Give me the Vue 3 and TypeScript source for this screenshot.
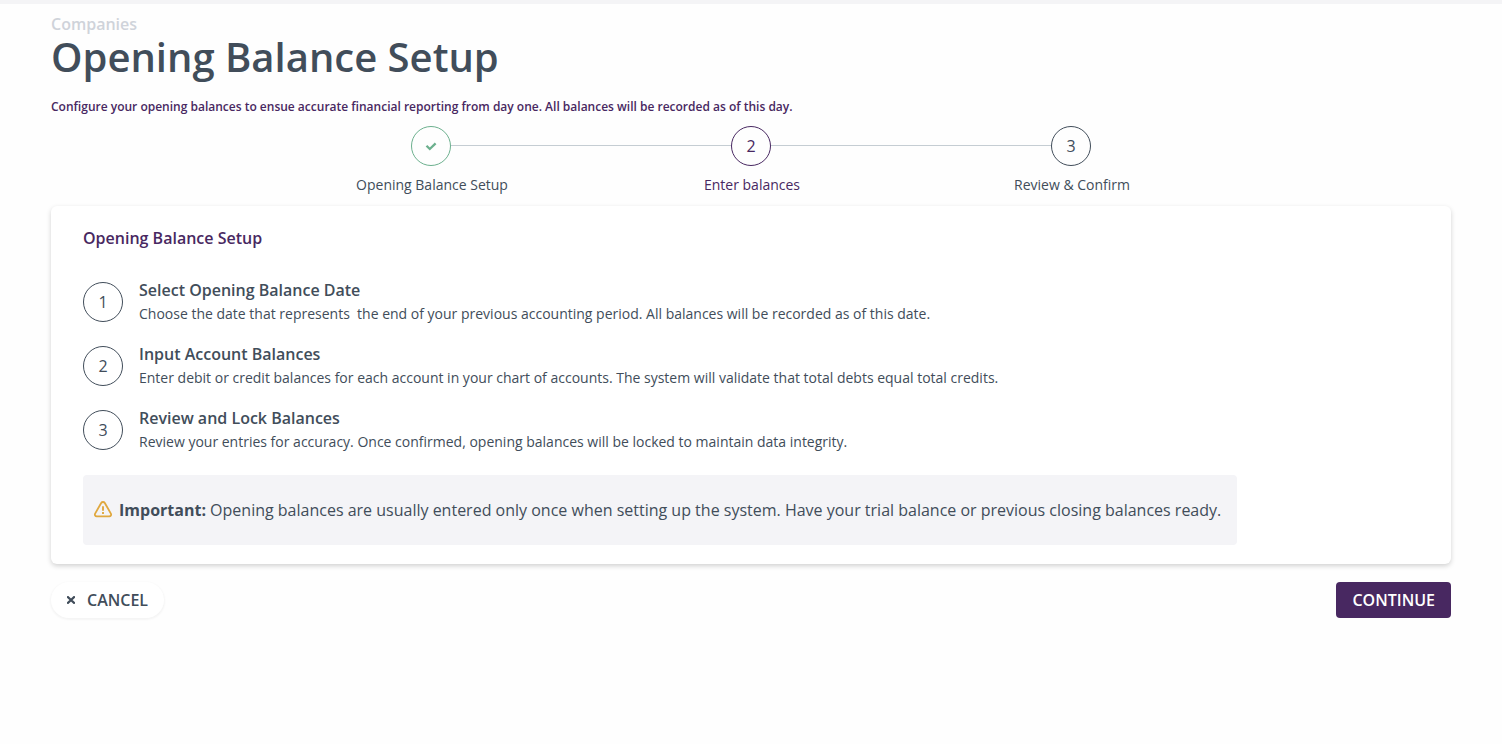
<script setup lang="ts">
interface Step {
  label: string
  state: 'done' | 'active' | 'todo'
}

interface Instruction {
  title: string
  text: string
}

const steps: Step[] = [
  { label: 'Opening Balance Setup', state: 'done' },
  { label: 'Enter balances', state: 'active' },
  { label: 'Review & Confirm', state: 'todo' },
]

const instructions: Instruction[] = [
  {
    title: 'Select Opening Balance Date',
    text: 'Choose the date that represents  the end of your previous accounting period. All balances will be recorded as of this date.',
  },
  {
    title: 'Input Account Balances',
    text: 'Enter debit or credit balances for each account in your chart of accounts. The system will validate that total debts equal total credits.',
  },
  {
    title: 'Review and Lock Balances',
    text: 'Review your entries for accuracy. Once confirmed, opening balances will be locked to maintain data integrity.',
  },
]
</script>

<template>
  <div class="page">
    <header>
      <a class="crumb" href="#">Companies</a>
      <h1>Opening Balance Setup</h1>
      <p class="lead">
        Configure your opening balances to ensue accurate financial reporting from day one. All balances will be recorded as of this day.
      </p>
    </header>

    <ol class="stepper">
      <li v-for="(step, i) in steps" :key="step.label" class="step" :class="step.state">
        <span class="circle">
          <svg v-if="step.state === 'done'" width="12" height="12" viewBox="0 0 12 12" aria-hidden="true">
            <path d="M1.5 5.7 4.8 9 10.6 3.4" fill="none" stroke="currentColor" stroke-width="2.3" />
          </svg>
          <template v-else>{{ i + 1 }}</template>
        </span>
        <span class="label">{{ step.label }}</span>
      </li>
    </ol>

    <section class="card">
      <h2>Opening Balance Setup</h2>
      <ol class="instructions">
        <li v-for="(item, i) in instructions" :key="item.title">
          <span class="circle">{{ i + 1 }}</span>
          <div>
            <h3>{{ item.title }}</h3>
            <p>{{ item.text }}</p>
          </div>
        </li>
      </ol>
      <div class="notice">
        <svg width="20" height="20" viewBox="0 0 20 20" fill="none" stroke="currentColor" aria-hidden="true">
          <path d="M8.2 3 2.1 13.6a1.9 1.9 0 0 0 1.6 2.8h12.6a1.9 1.9 0 0 0 1.6-2.8L11.8 3a2.1 2.1 0 0 0-3.6 0z" stroke-width="1.8" stroke-linejoin="round" />
          <path d="M10 6.2v4.6M10 12v2.1" stroke-width="1.9" />
        </svg>
        <p><strong>Important:</strong> Opening balances are usually entered only once when setting up the system. Have your trial balance or previous closing balances ready.</p>
      </div>
    </section>

    <footer>
      <button type="button" class="cancel">
        <svg width="8" height="8" viewBox="0 0 8 8" aria-hidden="true">
          <path d="M.2.4l7.6 7.2M7.8.4.2 7.6" fill="none" stroke="currentColor" stroke-width="2.2" />
        </svg>
        CANCEL
      </button>
      <button type="button" class="continue">CONTINUE</button>
    </footer>
  </div>
</template>

<style>
body {
  background: #fefefe;
}
</style>

<style scoped>
.page {
  border-top: 4px solid #f4f4f6;
  padding: 8px 51px 24px;
  color: #414d5a;
  font: 16px/24px "Open Sans", sans-serif;
}

h1,
h2,
h3,
p,
ol {
  margin: 0;
  padding: 0;
}

ol {
  list-style: none;
}

.crumb {
  display: block;
  width: fit-content;
  color: #cfd3da;
  font-weight: 600;
  text-decoration: none;
}

h1 {
  font-size: 40px;
  line-height: 42px;
  font-weight: 600;
}

.lead {
  margin-top: 21px;
  color: #482861;
  font-size: 12px;
  line-height: 16px;
  font-weight: 600;
}

.stepper {
  display: grid;
  grid-template-columns: repeat(3, 1fr);
  max-width: 960px;
  margin: 11px auto 0;
}

.step {
  display: flex;
  flex-direction: column;
  align-items: center;
  gap: 9px;
  position: relative;
}

.step + .step::before {
  content: "";
  position: absolute;
  top: 19px;
  right: calc(50% + 20px);
  width: calc(100% - 40px);
  height: 1px;
  background: #c5cdd3;
}

.circle {
  box-sizing: border-box;
  flex: none;
  display: flex;
  align-items: center;
  justify-content: center;
  width: 40px;
  height: 40px;
  border: 1px solid currentColor;
  border-radius: 50%;
}

.label {
  padding-left: 2px;
  font-size: 14px;
  line-height: 20px;
}

.done .circle {
  color: #6cb08e;
}

.active {
  color: #482861;
}

.card {
  margin-top: 11px;
  padding: 20px 32px 19px;
  background: #fff;
  border-radius: 6px;
  box-shadow: 0 2px 5px rgba(0, 0, 0, 0.18);
}

h2 {
  color: #482861;
  font-size: 16px;
  line-height: 24px;
  font-weight: 600;
}

.instructions {
  display: grid;
  gap: 16px;
  margin-top: 28px;
}

.instructions li {
  display: flex;
  align-items: center;
  gap: 16px;
}

h3 {
  font-size: 16px;
  line-height: 24px;
  font-weight: 600;
}

.instructions p {
  font-size: 14px;
  line-height: 24px;
  white-space: pre-wrap;
}

.notice {
  box-sizing: border-box;
  display: flex;
  align-items: center;
  gap: 6px;
  width: fit-content;
  margin-top: 21px;
  padding: 23px 16px 23px 10px;
  background: #f4f4f7;
  border-radius: 4px;
}

.notice svg {
  flex: none;
  color: #e0a83f;
}

.notice strong {
  font-weight: 700;
}

footer {
  display: flex;
  justify-content: space-between;
  align-items: flex-start;
  margin-top: 18px;
}

button {
  border: 0;
  padding: 6px 16px;
  font: 600 16px/24px "Open Sans", sans-serif;
  cursor: pointer;
}

.cancel {
  display: flex;
  align-items: center;
  gap: 12px;
  background: #fff;
  color: #414d5a;
  border-radius: 20px;
  box-shadow: 0 1px 2px 1px rgba(0, 0, 0, 0.04);
}

.continue {
  background: #482861;
  color: #fff;
  border-radius: 4px;
}
</style>
